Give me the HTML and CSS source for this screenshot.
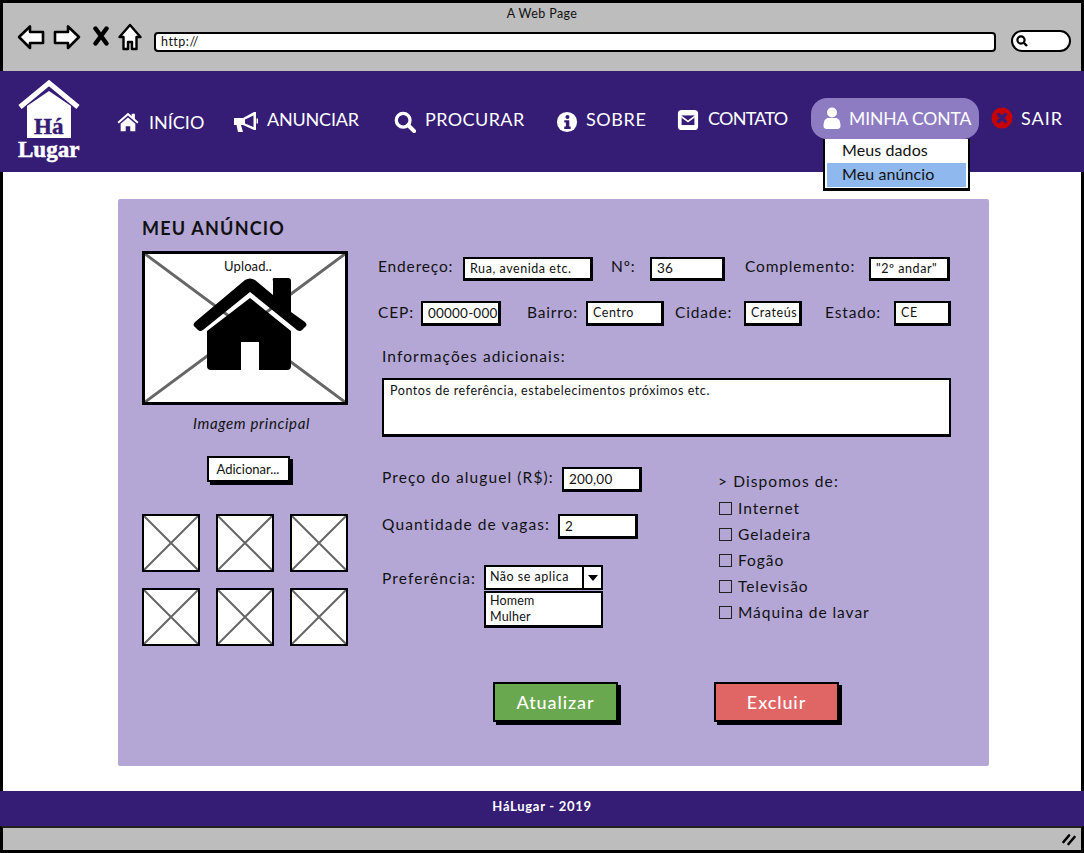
FILE: index.html
```html
<!DOCTYPE html>
<html lang="pt-BR">
<head>
<meta charset="utf-8">
<title>A Web Page</title>
<link rel="stylesheet" href="styles.css">
</head>
<body>
<header class="chrome">
  <div class="chrome-title">A Web Page</div>
  <div class="toolbar">
    <svg class="ic-back" viewBox="0 0 28 26"><path d="M2 13 L13 2.5 V8 H26 V19 H13 V24 Z" fill="#fff" stroke="#000" stroke-width="2.6" stroke-linejoin="round"/></svg>
    <svg class="ic-fwd" viewBox="0 0 28 26"><path d="M26 13 L15 2.5 V8 H2 V19 H15 V24 Z" fill="#fff" stroke="#000" stroke-width="2.6" stroke-linejoin="round"/></svg>
    <svg class="ic-x" viewBox="0 0 16 20"><path d="M2.5 2.5 L13.5 17.5 M13.5 2.5 L2.5 17.5" stroke="#000" stroke-width="4.4" stroke-linecap="round"/></svg>
    <svg class="ic-home" viewBox="0 0 24 28"><path d="M12 2 L22.5 14 H18.5 V26 H14 V19 H10 V26 H5.5 V14 H1.5 Z" fill="#fff" stroke="#000" stroke-width="2.4" stroke-linejoin="round"/></svg>
    <div class="urlbar">http://</div>
    <div class="searchpill"><svg class="ic-mag" viewBox="0 0 12 12"><circle cx="5" cy="5" r="3.6" fill="none" stroke="#000" stroke-width="2.2"/><path d="M8 8 L11 11" stroke="#000" stroke-width="2.4"/></svg></div>
  </div>
</header>

<nav class="nav">
  <div class="logo">
    <svg class="logo-house" viewBox="0 0 62 60"><path d="M2 27 L31 3 L60 27" fill="none" stroke="#fff" stroke-width="5"/><path d="M9 26 L31 11 L53 26 V58 H9 Z" fill="#fff"/></svg>
    <span class="logo-ha">Há</span>
    <span class="logo-lugar">Lugar</span>
  </div>
  <a class="nav-item item-inicio">
    <svg class="nav-ic" viewBox="0 0 24 22"><path d="M12 1 L0.5 11 L2 12.6 L12 4 L22 12.6 L23.5 11 L19.5 7.5 V2 H16 V4.5 Z M4 13 L12 6 L20 13 V21 H14.5 V15.5 H9.5 V21 H4 Z" fill="#fff"/></svg>
    <span class="nav-txt">INÍCIO</span>
  </a>
  <a class="nav-item item-anunciar">
    <svg class="nav-ic-wide" viewBox="0 0 24 22"><path fill-rule="evenodd" d="M0 7 H9 L20 1 H22 V19 H20 L9 14 H7 L9 21 H4 L2.5 14 H0 Z M11 8.4 V12.6 L19.5 16 V4.4 Z M22.5 7.5 H24 V12.5 H22.5 Z" fill="#fff"/></svg>
    <span class="nav-txt lift3">ANUNCIAR</span>
  </a>
  <a class="nav-item item-procurar">
    <svg class="nav-ic" viewBox="0 0 24 24"><circle cx="10" cy="10" r="7.5" fill="none" stroke="#fff" stroke-width="3.6"/><path d="M15.5 15.5 L22 22" stroke="#fff" stroke-width="4.4" stroke-linecap="round"/></svg>
    <span class="nav-txt lift3">PROCURAR</span>
  </a>
  <a class="nav-item item-sobre">
    <svg class="nav-ic" viewBox="0 0 24 24"><circle cx="12" cy="12" r="11" fill="#fff"/><circle cx="12.5" cy="6.5" r="2.2" fill="#351c75"/><path d="M9 10 H14.5 V17 H16 V19.5 H9 V17 H10.8 V12.5 H9 Z" fill="#351c75"/></svg>
    <span class="nav-txt lift3">SOBRE</span>
  </a>
  <a class="nav-item item-contato">
    <svg class="nav-ic" viewBox="0 0 24 24"><rect x="1" y="1" width="22" height="22" rx="4" fill="#fff"/><path d="M5 7 H19 V17.5 H5 Z" fill="#351c75"/><path d="M4.5 8 L12 13.5 L19.5 8" fill="none" stroke="#fff" stroke-width="1.8"/></svg>
    <span class="nav-txt lift3">CONTATO</span>
  </a>
  <div class="account">
    <a class="nav-item item-conta">
      <svg class="nav-ic-user" viewBox="0 0 18 22"><circle cx="9" cy="5.5" r="5" fill="#fff"/><path d="M0.5 19 C0.5 13 3 11 5.5 11 H12.5 C15 11 17.500 13 17.500 19 C17.500 21 16 22 14.500 22 H3.500 C2 22 0.500 21 0.500 19 Z" fill="#fff"/></svg>
      <span class="nav-txt">MINHA CONTA</span>
    </a>
    <ul class="menu">
      <li class="menu-item">Meus dados</li>
      <li class="menu-item menu-sel">Meu anúncio</li>
    </ul>
  </div>
  <a class="nav-item item-sair">
    <svg class="nav-ic" viewBox="0 0 22 22"><circle cx="11" cy="11" r="10.500" fill="#c90000"/><path d="M7.500 7.500 L14.500 14.500 M14.500 7.500 L7.500 14.500" stroke="#351c75" stroke-width="3.400" stroke-linecap="round"/></svg>
    <span class="nav-txt">SAIR</span>
  </a>
</nav>

<main class="main">
  <section class="panel">
    <h1 class="panel-title">MEU ANÚNCIO</h1>
    <div class="panel-body">
      <div class="col-images">
        <div class="imgbox">
          <svg class="cross" viewBox="0 0 100 100" preserveAspectRatio="none"><path d="M0 0 L100 100 M100 0 L0 100" stroke="#666" stroke-width="3" vector-effect="non-scaling-stroke"/></svg>
          <svg class="bighouse" viewBox="0 0 116 94"><path d="M82 0 H96 Q99 0 99 3 V34 L113 44 Q116 47 113 49 L110 52 Q108 54 105 52 L58 14 L11 52 Q8 54 6 52 L3 49 Q0 47 3 44 L53 2 Q58 -1 63 2 L81 17 V3 Q80 0 82 0 Z" fill="#000"/><path d="M58 20 L99 53 V88 Q99 92 95 92 H67 V64 H49 V92 H19 Q15 92 15 88 V53 Z" fill="#000"/></svg>
          <span class="upload">Upload..</span>
        </div>
        <p class="caption">Imagem principal</p>
        <button class="btn-add">Adicionar...</button>
        <div class="thumbs">
          <div class="thumb"><svg class="cross" viewBox="0 0 100 100" preserveAspectRatio="none"><path d="M0 0 L100 100 M100 0 L0 100" stroke="#666" stroke-width="2" vector-effect="non-scaling-stroke"/></svg></div>
          <div class="thumb"><svg class="cross" viewBox="0 0 100 100" preserveAspectRatio="none"><path d="M0 0 L100 100 M100 0 L0 100" stroke="#666" stroke-width="2" vector-effect="non-scaling-stroke"/></svg></div>
          <div class="thumb"><svg class="cross" viewBox="0 0 100 100" preserveAspectRatio="none"><path d="M0 0 L100 100 M100 0 L0 100" stroke="#666" stroke-width="2" vector-effect="non-scaling-stroke"/></svg></div>
          <div class="thumb"><svg class="cross" viewBox="0 0 100 100" preserveAspectRatio="none"><path d="M0 0 L100 100 M100 0 L0 100" stroke="#666" stroke-width="2" vector-effect="non-scaling-stroke"/></svg></div>
          <div class="thumb"><svg class="cross" viewBox="0 0 100 100" preserveAspectRatio="none"><path d="M0 0 L100 100 M100 0 L0 100" stroke="#666" stroke-width="2" vector-effect="non-scaling-stroke"/></svg></div>
          <div class="thumb"><svg class="cross" viewBox="0 0 100 100" preserveAspectRatio="none"><path d="M0 0 L100 100 M100 0 L0 100" stroke="#666" stroke-width="2" vector-effect="non-scaling-stroke"/></svg></div>
        </div>
      </div>

      <div class="col-form">
        <div class="row row-1">
          <label class="lbl w-endereco">Endereço:</label><div class="field f-endereco small">Rua, avenida etc.</div>
          <label class="lbl w-num">Nº:</label><div class="field f-num">36</div>
          <label class="lbl w-compl">Complemento:</label><div class="field f-compl small">"2º andar"</div>
        </div>
        <div class="row row-2">
          <label class="lbl w-cep">CEP:</label><div class="field f-cep">00000-000</div>
          <label class="lbl w-bairro">Bairro:</label><div class="field f-bairro small">Centro</div>
          <label class="lbl w-cidade">Cidade:</label><div class="field f-cidade small">Crateús</div>
          <label class="lbl w-estado">Estado:</label><div class="field f-estado small">CE</div>
        </div>
        <div class="lbl info-label">Informações adicionais:</div>
        <div class="textarea">Pontos de referência, estabelecimentos próximos etc.</div>
        <div class="lower">
          <div class="lower-left">
            <div class="row row-preco"><label class="lbl w-preco">Preço do aluguel (R$):</label><div class="field f-short">200,00</div></div>
            <div class="row row-vagas"><label class="lbl w-vagas">Quantidade de vagas:</label><div class="field f-short">2</div></div>
            <div class="row row-pref">
              <label class="lbl w-pref">Preferência:</label>
              <div class="combo">
                <div class="select"><span class="select-val">Não se aplica</span><span class="select-arrow"><svg class="caret" viewBox="0 0 10 6"><path d="M0 0 H10 L5 6 Z" fill="#000"/></svg></span></div>
                <div class="options"><div>Homem</div><div>Mulher</div></div>
              </div>
            </div>
          </div>
          <div class="lower-right">
            <div class="lbl dispomos">&gt; Dispomos de:</div>
            <div class="checks">
              <div class="check"><span class="box"></span>Internet</div>
              <div class="check"><span class="box"></span>Geladeira</div>
              <div class="check"><span class="box"></span>Fogão</div>
              <div class="check"><span class="box"></span>Televisão</div>
              <div class="check"><span class="box"></span>Máquina de lavar</div>
            </div>
          </div>
        </div>
        <div class="actions">
          <button class="btn btn-green">Atualizar</button>
          <button class="btn btn-red">Excluir</button>
        </div>
      </div>
    </div>
  </section>
</main>

<footer class="footer">HáLugar - 2019</footer>
<div class="status">
  <svg class="grip" viewBox="0 0 14 13"><path d="M1.500 9 L7 2.500 M6.500 11 L12.500 4" stroke="#000" stroke-width="2.600" stroke-linecap="round"/></svg>
</div>
</body>
</html>
```

FILE: styles.css
```css
* { box-sizing: border-box; }
html, body { margin: 0; padding: 0; }
body {
  width: 1084px;
  height: 853px;
  overflow: hidden;
  background: #fff;
  font-family: "Lato", "Open Sans", sans-serif;
  color: #111;
  display: flex;
  flex-direction: column;
}

/* browser chrome */
.chrome {
  height: 71px;
  background: #bdbdbd;
  border: 3px solid #000;
  border-bottom: 0;
}
.chrome-title {
  height: 20px;
  line-height: 22px;
  text-align: center;
  font-size: 12.500px;
  letter-spacing: .4px;
  color: #111;
}
.toolbar { display: flex; align-items: center; height: 30px; padding-left: 13px; }
.ic-back { width: 28px; height: 26px; margin: 0 0 2px 1px; }
.ic-fwd { width: 28px; height: 26px; margin: 0 0 2px 8px; }
.ic-x { width: 16px; height: 20px; margin: 0 0 4px 12px; }
.ic-home { width: 24px; height: 28px; margin: 0 0 2px 9px; }
.urlbar {
  width: 842px;
  height: 20px;
  margin-left: 12px;
  margin-top: 8px;
  background: #fff;
  border: 2.500px solid #000;
  border-radius: 4px;
  font-size: 12.500px;
  line-height: 15px;
  padding-left: 5px;
  letter-spacing: .5px;
  color: #111;
}
.searchpill {
  width: 60px;
  height: 22px;
  margin-left: 15px;
  margin-top: 6px;
  background: #fff;
  border: 2.500px solid #000;
  border-radius: 11px;
  display: flex;
  align-items: center;
  padding-left: 3px;
}
.ic-mag { width: 12px; height: 12px; }

/* nav */
.nav {
  height: 101px;
  background: #351c75;
  display: flex;
  align-items: center;
  padding-left: 18px;
  color: #fff;
}
.logo {
  width: 62px;
  height: 82px;
  margin-top: -1px;
  margin-right: 37px;
  position: relative;
  flex: none;
}
.logo-house { width: 62px; height: 60px; display: block; }
.logo-ha {
  position: absolute;
  left: 16px;
  top: 37px;
  font: bold 23px/20px "Liberation Serif", serif;
  -webkit-text-stroke: .5px #351c75;
  color: #351c75;
}
.logo-lugar {
  position: absolute;
  left: 0;
  top: 60px;
  font: bold 23px/20px "Liberation Serif", serif;
  -webkit-text-stroke: .5px #fff;
  color: #fff;
}
.nav-item { display: flex; align-items: center; gap: 9px; color: #fff; font-size: 18px; white-space: nowrap; flex: none; }
.nav-ic { width: 22px; height: 22px; flex: none; }
.nav-ic-wide { width: 24px; height: 22px; flex: none; }
.nav-ic-user { width: 18px; height: 22px; flex: none; }
.lift3 { padding-bottom: 5px; }
.item-inicio { width: 117px; gap: 10px; }
.item-anunciar { width: 160px; }
.item-anunciar .nav-txt { letter-spacing: -.2px; }
.item-procurar { width: 162px; gap: 9px; }
.item-procurar .nav-txt { letter-spacing: .4px; }
.item-sobre { width: 121px; gap: 8px; }
.item-sobre .nav-txt { letter-spacing: .6px; }
.item-contato { width: 134px; margin-top: -3px; }
.item-contato .nav-txt { letter-spacing: -.75px; }
.item-conta { padding-left: 12px; gap: 8px; height: 41px; }
.item-conta .nav-txt { letter-spacing: -.1px; font-size: 17.500px; }
.item-sair { margin-left: 12px; margin-top: -7px; gap: 8px; }
.item-sair .nav-txt { letter-spacing: 1px; }
.account {
  position: relative;
  margin-top: -7px;
  width: 168px;
  height: 41px;
  flex: none;
  background: #8e7cc3;
  border-radius: 16px;
}
.menu {
  position: absolute;
  left: 12px;
  top: 41px;
  width: 147px;
  height: 52px;
  margin: 0;
  padding: 0 2px;
  list-style: none;
  background: #fff;
  border: 2px solid #000;
  border-top: 0;
  border-bottom-width: 3px;
  font-size: 16px;
  color: #111;
}
.menu-item { height: 24px; line-height: 22px; padding-left: 15px; letter-spacing: .1px; }
.menu-sel { background: #8fb8ee; }

/* main */
.main {
  height: 619px;
  background: #fff;
  border-left: 3px solid #000;
  border-right: 3px solid #000;
  padding: 27px 0 0 115px;
}
.panel {
  width: 871px;
  height: 567px;
  background: #b4a7d6;
  padding: 17px 0 0 24px;
  border-radius: 2px;
}
.panel-title {
  margin: 0 0 11px;
  height: 24px;
  line-height: 24px;
  font-size: 18px;
  font-weight: 700;
  letter-spacing: 1.2px;
  color: #111;
}
.panel-body { display: flex; gap: 30px; }
.col-images { width: 206px; display: flex; flex-direction: column; align-items: center; }
.imgbox, .thumb { position: relative; background: #fff; border: 3px solid #000; }
.imgbox { width: 206px; height: 154px; display: flex; justify-content: center; }
.cross { position: absolute; inset: 0; width: 100%; height: 100%; }
.bighouse { position: absolute; left: 47px; top: 24px; width: 116px; height: 94px; }
.upload { position: relative; font-size: 13px; line-height: 20px; height: 20px; margin: 2px 0 0 6px; letter-spacing: .1px; }
.caption {
  margin: 8px 0 0 13px;
  height: 20px;
  line-height: 20px;
  font-size: 15px;
  font-style: italic;
  letter-spacing: .65px;
  white-space: nowrap;
}
.btn-add {
  width: 83px;
  height: 26px;
  margin: 23px 0 0 6px;
  padding: 0;
  background: #fff;
  border: 2px solid #000;
  box-shadow: 3px 3px 0 #000;
  font: 13px "Lato", sans-serif;
  color: #111;
}
.thumbs { margin-top: 32px; display: grid; grid-template-columns: repeat(3, 58px); gap: 16px; }
.thumb { width: 58px; height: 58px; border-width: 2px; }

/* form */
.col-form { width: 573px; }
.row { display: flex; align-items: center; }
.lbl { font-size: 15.500px; letter-spacing: 1.1px; white-space: nowrap; flex: none; }
.row-1 .lbl { padding-bottom: 6px; letter-spacing: .85px; }
.row-2 .lbl { padding-bottom: 4px; letter-spacing: .85px; }
.field {
  height: 24px;
  background: #fff;
  border: 2px solid #000;
  border-right-width: 3px;
  border-bottom-width: 3px;
  line-height: 19px;
  padding-left: 5px;
  font-size: 13.500px;
  letter-spacing: .2px;
  overflow: hidden;
  white-space: nowrap;
  flex: none;
}
.small { font-size: 12.500px; letter-spacing: .55px; }
.row-1 { margin-top: 6px; }
.row-2 { margin-top: 20px; }
.row-2 .field { height: 25px; line-height: 20px; }
.w-endereco { width: 85px; }
.f-endereco { width: 130px; margin-right: 18px; }
.w-num { width: 39px; }
.f-num { width: 75px; margin-right: 20px; }
.w-compl { width: 124px; }
.f-compl { width: 81px; }
.w-cep { width: 43px; }
.f-cep { width: 80px; margin-right: 26px; }
.w-bairro { width: 59px; }
.f-bairro { width: 78px; margin-right: 11px; }
.w-cidade { width: 69px; }
.f-cidade { width: 58px; margin-right: 23px; }
.w-estado { width: 69px; }
.f-estado { width: 57px; }
.info-label { margin: 20px 0 0 4px; height: 21px; line-height: 20px; }
.textarea {
  width: 569px;
  height: 59px;
  margin: 11px 0 0 4px;
  background: #fff;
  border: 2px solid #000;
  border-bottom-width: 3px;
  padding: 2px 6px;
  font-size: 12.500px;
  line-height: 18px;
  letter-spacing: .56px;
}
.lower { margin: 30px 0 0 4px; display: flex; }
.lower-left { width: 336px; }
.row-preco .field, .row-vagas .field, .select { height: 25px; line-height: 20px; }
.w-preco { width: 180px; padding-bottom: 5px; }
.w-vagas { width: 176px; padding-bottom: 5px; }
.f-short { width: 80px; }
.row-vagas { margin-top: 22px; }
.row-pref { margin-top: 26px; align-items: flex-start; }
.w-pref { width: 102px; height: 25px; line-height: 27px; }
.combo { width: 119px; }
.select {
  display: flex;
  background: #fff;
  border: 2px solid #000;
  font-size: 12.500px;
  letter-spacing: .5px;
}
.select-val { flex: 1; padding-left: 4px; }
.select-arrow {
  width: 19px;
  border-left: 2px solid #000;
  display: flex;
  align-items: center;
  justify-content: center;
}
.caret { width: 10px; height: 6px; }
.options {
  height: 37px;
  margin-top: 1px;
  background: #fff;
  border: 2px solid #000;
  border-bottom-width: 3px;
  padding: 0 4px;
  font-size: 12.500px;
  line-height: 16px;
  letter-spacing: .2px;
}
.dispomos { margin-top: 4px; height: 20px; line-height: 20px; }
.checks { margin-top: 7px; display: flex; flex-direction: column; gap: 6px; }
.check { display: flex; align-items: center; gap: 6px; height: 20px; font-size: 15.500px; letter-spacing: .95px; }
.box { width: 13px; height: 13px; border: 1.500px solid #222; margin-left: 1px; }
.actions { margin: 54px 0 0 115px; display: flex; gap: 96px; }
.btn {
  width: 125px;
  height: 40px;
  padding: 0;
  border: 2px solid #000;
  box-shadow: 3px 3px 0 #000;
  color: #fff;
  font: 500 18px "Lato", sans-serif;
  letter-spacing: .9px;
}
.btn-green { background: #6aa84f; }
.btn-red { background: #e06666; }

/* footer */
.footer {
  height: 35px;
  background: #351c75;
  color: #fff;
  text-align: center;
  font-size: 13px;
  font-weight: 700;
  line-height: 31px;
  letter-spacing: .7px;
}
.status {
  height: 27px;
  background: #bdbdbd;
  border: 3px solid #000;
  border-top: 2px solid #222;
  display: flex;
  justify-content: flex-end;
  align-items: center;
  padding-right: 5px;
}
.grip { width: 14px; height: 13px; }
```
